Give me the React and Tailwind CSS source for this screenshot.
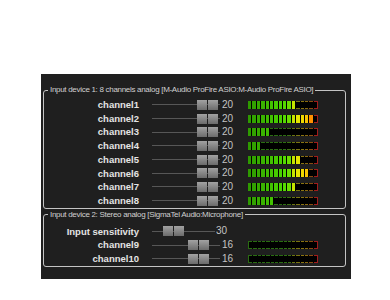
import React from "react";

// lit / unlit colours for the 16 meter segments
const LIT = [
  "#2e9a00", "#32a200", "#36aa00", "#3ab200", "#3eba00", "#42c200",
  "#46ca00", "#4ad200", "#56da00", "#6ade00", "#c4e400", "#e6e600",
  "#f0d800", "#f8c400", "#ff9000", "#e02000",
];
const DIM = [
  "#2a6c12", "#2a6c12", "#2a6c12", "#2a6c12", "#2a6c12", "#2a6c12",
  "#2a6c12", "#2a6c12", "#2e7012", "#3a7012", "#6a7410", "#7a7410",
  "#8a7410", "#8a6a10", "#8a4c10", "#a01c1c",
];

const channels = [
  { name: "channel1", level: 11 },
  { name: "channel2", level: 15 },
  { name: "channel3", level: 5 },
  { name: "channel4", level: 3 },
  { name: "channel5", level: 12 },
  { name: "channel6", level: 14 },
  { name: "channel7", level: 11 },
  { name: "channel8", level: 6 },
];

const Meter = ({ level }) => (
  <div className="flex w-[70px] h-[8px] gap-[1px] bg-black">
    {LIT.map((c, i) => {
      const lit = i < level;
      return (
        <div
          key={i}
          className="flex-1"
          style={{
            background: lit ? c : "#000",
            borderStyle: "solid",
            borderColor: DIM[i],
            borderTopWidth: lit ? 0 : 1,
            borderBottomWidth: lit ? 0 : 1,
            borderLeftWidth: !lit && i === 0 ? 1 : 0,
            borderRightWidth: !lit && i === 15 ? 1 : 0,
          }}
        />
      );
    })}
  </div>
);

const Slider = ({ width, thumb }) => (
  <div className="relative h-full flex items-center" style={{ width }}>
    <div className="w-full h-px bg-[#575757]" />
    {/* THUMB */}
    <div className="absolute top-1/2 -translate-y-1/2 flex gap-[1px]" style={{ left: thumb }}>
      <div className="w-[10px] h-[10px] bg-gradient-to-b from-[#a2a2a2] to-[#6c6c6c]" />
      <div className="w-[10px] h-[10px] bg-gradient-to-b from-[#a2a2a2] to-[#6c6c6c]" />
    </div>
  </div>
);

const Row = ({ label, value, level, width = 68, thumb = 45, valueGap = "ml-[2px]" }) => (
  <div className="flex items-center h-[13.7px]">
    <div className="w-[95px] text-right font-bold text-[9.5px] leading-none text-[#e4e4e4]">{label}</div>
    <div className="ml-[13px] h-full flex items-center">
      <Slider width={width} thumb={thumb} />
    </div>
    <div className={`${valueGap} w-[26px] text-[10px] leading-none text-[#c4c4c4]`}>{value}</div>
    {level !== undefined && <Meter level={level} />}
  </div>
);

const Group = ({ title, children, className }) => (
  <fieldset className={`border border-[#c4c4c4] rounded-[3px] ${className}`}>
    <legend className="ml-[4px] px-[2px] text-[8px] leading-[10px] tracking-[-0.3px] text-[#d0d0d0]">
      {title}
    </legend>
    {children}
  </fieldset>
);

export default function App() {
  return (
    <div
      className="w-[390px] h-[300px] bg-white pt-[74px] pl-[41px]"
      style={{ fontFamily: '"Liberation Sans", Arial, sans-serif' }}
    >
      <div className="w-[310px] h-[205px] bg-[#1f1f1f] pl-[2px] pr-[5px] pt-[11px]">
        {/* DEVICE 1 */}
        <Group
          title="Input device 1: 8 channels analog [M-Audio ProFire ASIO:M-Audio ProFire ASIO]"
          className="pt-[3px]"
        >
          {channels.map((c) => (
            <Row key={c.name} label={c.name} value="20" level={c.level} />
          ))}
        </Group>

        {/* DEVICE 2 */}
        <Group
          title="Input device 2: Stereo analog [SigmaTel Audio:Microphone]"
          className="mt-[1px] pt-[5px]"
        >
          <Row label="Input sensitivity" value="30" width={63} thumb={11} valueGap="ml-[1px]" />
          <Row label="channel9" value="16" level={0} thumb={36} />
          <Row label="channel10" value="16" level={0} thumb={36} />
        </Group>
      </div>
    </div>
  );
}
